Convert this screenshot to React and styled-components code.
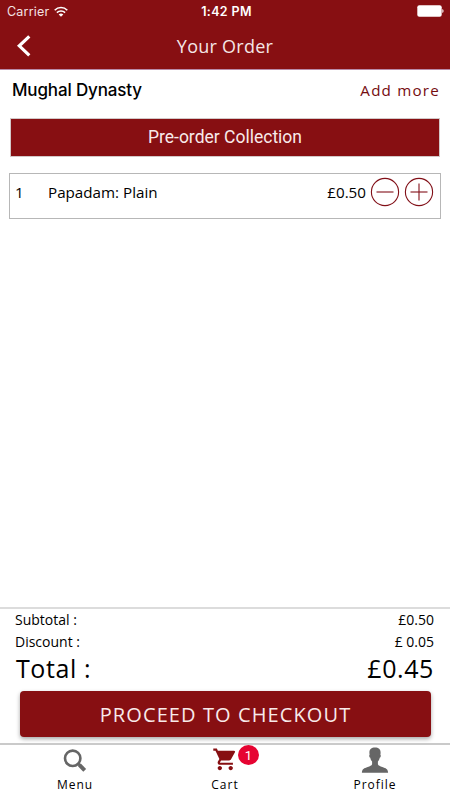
import React from 'react';
import styled, {createGlobalStyle} from 'styled-components';

const GlobalStyle = createGlobalStyle`
    * {
        box-sizing: border-box;
    }
    body {
        margin: 0;
        background: #fff;
        font-family: 'Open Sans', sans-serif;
        color: #000;
    }
`;

const Screen = styled.div`
    width: 450px;
    height: 800px;
    display: flex;
    flex-direction: column;
    overflow: hidden;
    white-space: nowrap;
`;

const Header = styled.header`
    height: 70px;
    background: #870f12;
    border-bottom: 1px solid #b98aa8;
    color: #fff;
`;

const StatusBar = styled.div`
    height: 23px;
    display: grid;
    grid-template-columns: 1fr auto 1fr;
    align-items: center;
    padding: 0 6px 0 7px;
    font-family: Inter, sans-serif;
    font-size: 12.5px;
`;

const Carrier = styled.div`
    display: flex;
    align-items: center;
    gap: 5px;
    letter-spacing: 0.2px;
    color: #f3e3e3;
`;

const Clock = styled.div`
    padding-left: 2px;
    font-weight: 600;
    letter-spacing: 0.35px;
`;

const BatterySlot = styled.div`
    display: flex;
    justify-content: flex-end;
    padding-bottom: 1px;
`;

const TitleBar = styled.div`
    height: 46px;
    display: grid;
    grid-template-columns: 48px 1fr 48px;
    align-items: center;
`;

const BackButton = styled.button`
    display: flex;
    padding: 0 0 0 16px;
    border: 0;
    background: none;
`;

const Title = styled.h1`
    margin: 0;
    text-align: center;
    font-size: 18px;
    line-height: 24px;
    font-weight: 400;
    letter-spacing: 0.25px;
    color: #f5e6e6;
`;

const Restaurant = styled.div`
    height: 48px;
    display: flex;
    align-items: center;
    justify-content: space-between;
    padding: 0 10px 8px 12px;
`;

const RestaurantName = styled.h2`
    margin: 0;
    font-family: Inter, sans-serif;
    font-size: 17px;
    line-height: 22px;
    font-weight: 500;
    letter-spacing: -0.15px;
`;

const AddMore = styled.a`
    font-size: 15.2px;
    letter-spacing: 1.2px;
    color: #750c10;
`;

const Banner = styled.div`
    height: 39px;
    flex: none;
    margin: 0 10px;
    padding-bottom: 2px;
    display: flex;
    align-items: center;
    justify-content: center;
    border: 1px solid #d2c8c8;
    background: #870f12;
    color: #f8eaea;
    font-family: Roboto, sans-serif;
    font-size: 17.5px;
`;

const OrderRow = styled.div`
    height: 46px;
    flex: none;
    margin: 16px 9px 0;
    padding: 3px 6px 0 5px;
    display: flex;
    align-items: flex-start;
    border: 1px solid #b7b7b7;
    font-size: 15.2px;
    line-height: 30px;
`;

const Quantity = styled.span`
    width: 33px;
`;

const ItemName = styled.span`
    flex: 1;
`;

const StepButton = styled.button`
    display: flex;
    padding: 0;
    margin-left: ${({$gap}) => $gap}px;
    border: 0;
    background: none;
`;

const Summary = styled.section`
    height: 136px;
    margin-top: auto;
    border-top: 2px solid #dcdcdc;
    padding: 0 16px 0 15px;
`;

const Line = styled.div`
    height: 22px;
    display: flex;
    justify-content: space-between;
    font-size: 14px;
    line-height: 21px;
`;

const Total = styled.div`
    height: 38px;
    display: flex;
    justify-content: space-between;
    padding-left: 1px;
    font-size: 25px;
    line-height: 30px;
    letter-spacing: 0.6px;
`;

const Checkout = styled.button`
    width: 411px;
    height: 46px;
    margin-left: 5px;
    padding: 0;
    border: 0;
    border-radius: 4px;
    background: #870f12;
    box-shadow: 0 2px 4px rgba(0, 0, 0, 0.35);
    color: #f8eaea;
    font-family: inherit;
    font-size: 20px;
    letter-spacing: 1.1px;
`;

const TabBar = styled.nav`
    height: 57px;
    flex: none;
    display: grid;
    grid-template-columns: repeat(3, 1fr);
    border-top: 2px solid #cacaca;
`;

const Tab = styled.a`
    display: flex;
    flex-direction: column;
    align-items: center;
    font-size: 12px;
    line-height: 16px;
    letter-spacing: 1px;
`;

const TabIcon = styled.div`
    position: relative;
    width: 30px;
    height: 32px;
    svg {
        display: block;
    }
`;

const Badge = styled.span`
    position: absolute;
    left: 28px;
    top: 0;
    width: 21px;
    height: 20px;
    border-radius: 50%;
    background: #e60432;
    color: #fff;
    font-family: Roboto, sans-serif;
    font-size: 13px;
    line-height: 21px;
    letter-spacing: 0;
    text-align: center;
`;

const WifiIcon = () => (
    <svg width="14" height="12" viewBox="0 0 14 12" fill="none" stroke="#fff" strokeWidth="1.6">
        <path d="M.7 4.200C4.200.6 9.800.6 13.300 4.200" />
        <path d="M2.900 6.600c2.300-2.200 5.900-2.200 8.200 0" />
        <path d="M4.700 8.500C6 7.200 8 7.200 9.300 8.500L7 10.800z" fill="#fff" stroke="none" />
    </svg>
);

const BatteryIcon = () => (
    <svg width="27" height="12" viewBox="0 0 27 12">
        <rect x="0.300" y="0.300" width="24.400" height="11.400" rx="2" fill="#fff" />
        <path d="M25.300 4v4c1.700-.6 1.700-3.400 0-4z" fill="#fff" />
    </svg>
);

const BackIcon = () => (
    <svg width="16" height="22" viewBox="0 0 16 22">
        <path d="M13.300 1.300L3.300 10.800l10 9.500" fill="none" stroke="#fff" strokeWidth="3.200" />
    </svg>
);

const StepIcon = ({plus}) => (
    <svg width="30" height="30" viewBox="0 0 30 30" fill="none" stroke="#821018" strokeWidth="1.100">
        <circle cx="15" cy="15" r="13.600" />
        <path d="M6.500 15h17" />
        {plus && <path d="M15 6.500v17" />}
    </svg>
);

const SearchIcon = () => (
    <svg width="30" height="30" viewBox="0 0 30 30" fill="none" stroke="#666">
        <circle cx="12.700" cy="13.300" r="7.700" strokeWidth="2.600" />
        <path d="M18 18.500l2 2" strokeWidth="2.600" />
        <path d="M19.400 19.900l5.300 5.400" strokeWidth="4" strokeLinejoin="round" />
    </svg>
);

const CartIcon = () => (
    <svg width="30" height="30" viewBox="0 0 30 30">
        <g transform="translate(2.200 1.300) scale(1.090)" fill="#870f12">
            <path d="M7 18c-1.100 0-1.990.9-1.990 2S5.900 22 7 22s2-.9 2-2-.9-2-2-2zM1 2v2h2l3.600 7.590-1.350 2.450c-.16.28-.25.61-.25.960 0 1.100.9 2 2 2h12v-2H7.420c-.14 0-.25-.11-.25-.25l.03-.12.900-1.630h7.450c.75 0 1.410-.41 1.750-1.030l3.580-6.490A1 1 0 0 0 20 4H5.210l-.94-2H1zm16 16c-1.100 0-1.990.9-1.990 2s.89 2 1.990 2 2-.9 2-2-.9-2-2-2z" />
        </g>
    </svg>
);

const ProfileIcon = () => (
    <svg width="30" height="30" viewBox="0 0 30 30">
        <path d="M15 2.500c-3.600 0-5.700 2-5.600 5.100 0 1 .1 1.600.2 2.300-.8.200-.4 2.300.7 2.900.3 1.700.9 2.900 1.800 3.700v2.800c-.5 1.400-2.200 1.900-4.400 2.700-3.600 1.200-5.700 2-5.800 5.700h26.200c-.1-3.700-2.200-4.500-5.800-5.700-2.200-.8-3.900-1.300-4.400-2.700v-2.800c.9-.8 1.500-2 1.800-3.700 1.100-.6 1.500-2.700.7-2.900.1-.7.2-1.300.2-2.300C20.700 4.500 18.600 2.500 15 2.500z" fill="#666" />
    </svg>
);

const lines = [
    {label: 'Subtotal :', value: '£0.50'},
    {label: 'Discount :', value: '£ 0.05'},
];

const App = () => {
    return (
        <>
            <GlobalStyle />
            <Screen>
                <Header>
                    <StatusBar>
                        <Carrier>Carrier <WifiIcon /></Carrier>
                        <Clock>1:42 PM</Clock>
                        <BatterySlot><BatteryIcon /></BatterySlot>
                    </StatusBar>
                    <TitleBar>
                        <BackButton aria-label="Back"><BackIcon /></BackButton>
                        <Title>Your Order</Title>
                    </TitleBar>
                </Header>

                <Restaurant>
                    <RestaurantName>Mughal Dynasty</RestaurantName>
                    <AddMore>Add more</AddMore>
                </Restaurant>

                <Banner>Pre-order Collection</Banner>

                <OrderRow>
                    <Quantity>1</Quantity>
                    <ItemName>Papadam: Plain</ItemName>
                    <span>£0.50</span>
                    <StepButton $gap={4} aria-label="Remove one"><StepIcon /></StepButton>
                    <StepButton $gap={4} aria-label="Add one"><StepIcon plus /></StepButton>
                </OrderRow>

                <Summary>
                    {lines.map(({label, value}) => (
                        <Line key={label}>
                            <span>{label}</span>
                            <span>{value}</span>
                        </Line>
                    ))}
                    <Total>
                        <span>Total :</span>
                        <span>£0.45</span>
                    </Total>
                    <Checkout>PROCEED TO CHECKOUT</Checkout>
                </Summary>

                <TabBar>
                    <Tab>
                        <TabIcon><SearchIcon /></TabIcon>
                        Menu
                    </Tab>
                    <Tab>
                        <TabIcon>
                            <CartIcon />
                            <Badge>1</Badge>
                        </TabIcon>
                        Cart
                    </Tab>
                    <Tab>
                        <TabIcon><ProfileIcon /></TabIcon>
                        Profile
                    </Tab>
                </TabBar>
            </Screen>
        </>
    );
};

export default App;
